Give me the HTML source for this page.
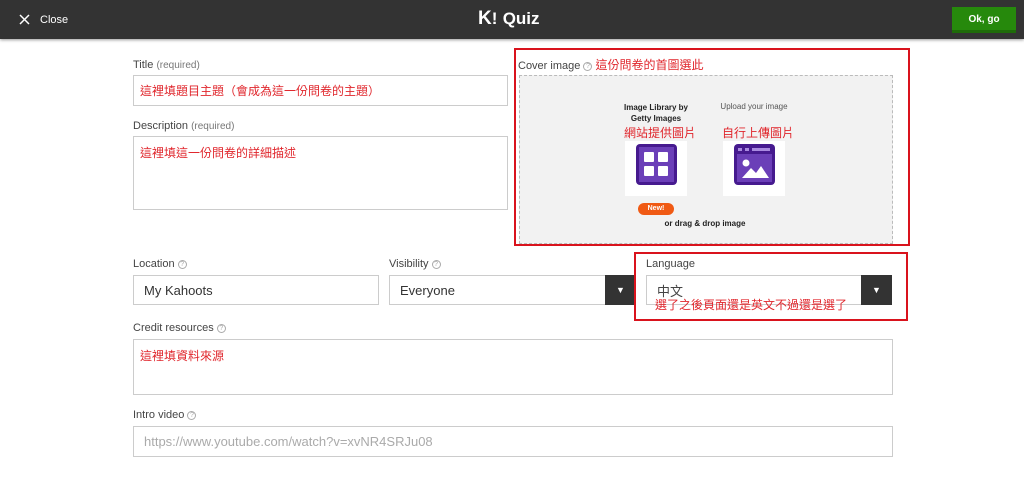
<!DOCTYPE html>
<html><head><meta charset="utf-8"><style>
*{box-sizing:border-box;margin:0;padding:0}
body{width:1024px;height:486px;background:#fff;font-family:"Liberation Sans","Noto Sans CJK TC",sans-serif;position:relative;overflow:hidden;color:#333}
.a{position:absolute}
.hdr{left:0;top:0;width:1024px;height:39px;background:#333;box-shadow:0 1px 3px rgba(0,0,0,.4)}
.lbl{font-size:11px;color:#444;line-height:13px}
.lbl small{font-size:10px;color:#777}
.q{display:inline-block;width:9px;height:9px;border:1px solid #aaa;border-radius:50%;font-size:7px;line-height:8px;text-align:center;color:#aaa;vertical-align:middle}
.in{border:1px solid #ccc;background:#fff}
.red{color:#e0262c;font-size:12px;line-height:14px}
.redbox{border:2px solid #d9131d}
.btn{background:#333;color:#fff;font-size:9px;text-align:center}
.tile{background:#fff}
</style></head><body>
<div class="a hdr"></div>
<svg class="a" style="left:19px;top:14px" width="11" height="11"><path d="M1 1L10 10M10 1L1 10" stroke="#fff" stroke-width="1.5"/></svg>
<div class="a" style="left:40px;top:14px;font-size:11px;color:#fff">Close</div>
<div class="a" style="left:478px;top:8px;font-size:19px;font-weight:bold;color:#fff">K<span style="font-size:17px">!</span> <span style="font-size:17px">Quiz</span></div>
<div class="a" style="left:952px;top:7px;width:64px;height:26px;background:#26890c;border-bottom:3px solid #1e6b09;color:#fff;font-size:10px;font-weight:bold;text-align:center;line-height:25px">Ok, go</div>

<div class="a lbl" style="left:133px;top:59px">Title <small>(required)</small></div>
<div class="a in" style="left:133px;top:75px;width:375px;height:31px"></div>
<div class="a red" style="left:140px;top:84px">這裡填題目主題（會成為這一份問卷的主題）</div>
<div class="a lbl" style="left:133px;top:120px">Description <small>(required)</small></div>
<div class="a in" style="left:133px;top:136px;width:375px;height:74px"></div>
<div class="a red" style="left:140px;top:146px">這裡填這一份問卷的詳細描述</div>

<div class="a redbox" style="left:514px;top:48px;width:396px;height:198px"></div>
<div class="a lbl" style="left:518px;top:58px">Cover image <span class="q">?</span> <span class="red">這份問卷的首圖選此</span></div>
<div class="a" style="left:519px;top:75px;width:374px;height:169px;background:#f2f2f2;border:1px dashed #bbb"></div>
<div class="a" style="left:606px;top:102px;width:100px;text-align:center;font-size:8px;font-weight:bold;line-height:11px;color:#222">Image Library by<br>Getty Images</div>
<div class="a" style="left:704px;top:102px;width:100px;text-align:center;font-size:8px;color:#555">Upload your image</div>
<div class="a red" style="left:624px;top:126px">網站提供圖片</div>
<div class="a red" style="left:722px;top:126px">自行上傳圖片</div>
<div class="a tile" style="left:625px;top:141px;width:62px;height:55px"></div>
<div class="a tile" style="left:723px;top:141px;width:62px;height:55px"></div>
<svg class="a" style="left:636px;top:144px" width="41" height="41"><rect x="0" y="0" width="41" height="41" rx="4" fill="#461a8f"/><rect x="3" y="3" width="35" height="35" fill="#6b3fb8"/><rect x="8" y="8" width="10" height="10" rx="1" fill="#fff"/><rect x="22" y="8" width="10" height="10" rx="1" fill="#fff"/><rect x="8" y="22" width="10" height="10" rx="1" fill="#fff"/><rect x="22" y="22" width="10" height="10" rx="1" fill="#fff"/></svg>
<svg class="a" style="left:734px;top:144px" width="41" height="41"><rect width="41" height="41" rx="4" fill="#461a8f"/><rect x="3" y="10" width="35" height="28" fill="#6b3fb8"/><rect x="4" y="4" width="4" height="3" fill="#a98ae0"/><rect x="11" y="4" width="4" height="3" fill="#a98ae0"/><rect x="18" y="4" width="18" height="3" fill="#a98ae0"/><circle cx="12" cy="19" r="3.5" fill="#fff"/><path d="M8 34L17 24L22 29L27 22L35 34Z" fill="#fff"/></svg>
<div class="a" style="left:638px;top:203px;width:36px;height:12px;border-radius:6px;background:#f05a14;color:#fff;font-size:7px;font-weight:bold;text-align:center;line-height:12px">New!</div>
<div class="a" style="left:645px;top:219px;width:120px;text-align:center;font-size:8px;font-weight:bold;color:#222">or drag &amp; drop image</div>

<div class="a lbl" style="left:133px;top:258px">Location <span class="q">?</span></div>
<div class="a in" style="left:133px;top:275px;width:246px;height:30px;font-size:13px;padding:7px 10px">My Kahoots</div>
<div class="a lbl" style="left:389px;top:258px">Visibility <span class="q">?</span></div>
<div class="a in" style="left:389px;top:275px;width:247px;height:30px;font-size:13px;padding:7px 10px">Everyone</div>
<div class="a btn" style="left:605px;top:275px;width:31px;height:30px;line-height:30px">▼</div>

<div class="a redbox" style="left:634px;top:252px;width:274px;height:69px"></div>
<div class="a lbl" style="left:646px;top:258px">Language</div>
<div class="a in" style="left:646px;top:275px;width:246px;height:30px;font-size:13px;padding:5px 10px;color:#444">中文</div>
<div class="a btn" style="left:861px;top:275px;width:31px;height:30px;line-height:30px">▼</div>
<div class="a red" style="left:655px;top:298px">選了之後頁面還是英文不過還是選了</div>

<div class="a lbl" style="left:133px;top:322px">Credit resources <span class="q">?</span></div>
<div class="a in" style="left:133px;top:339px;width:760px;height:56px"></div>
<div class="a red" style="left:140px;top:349px">這裡填資料來源</div>
<div class="a lbl" style="left:133px;top:409px">Intro video <span class="q">?</span></div>
<div class="a in" style="left:133px;top:426px;width:760px;height:31px;font-size:13px;padding:7px 10px;color:#aaa">https://www.youtube.com/watch?v=xvNR4SRJu08</div>
</body></html>
